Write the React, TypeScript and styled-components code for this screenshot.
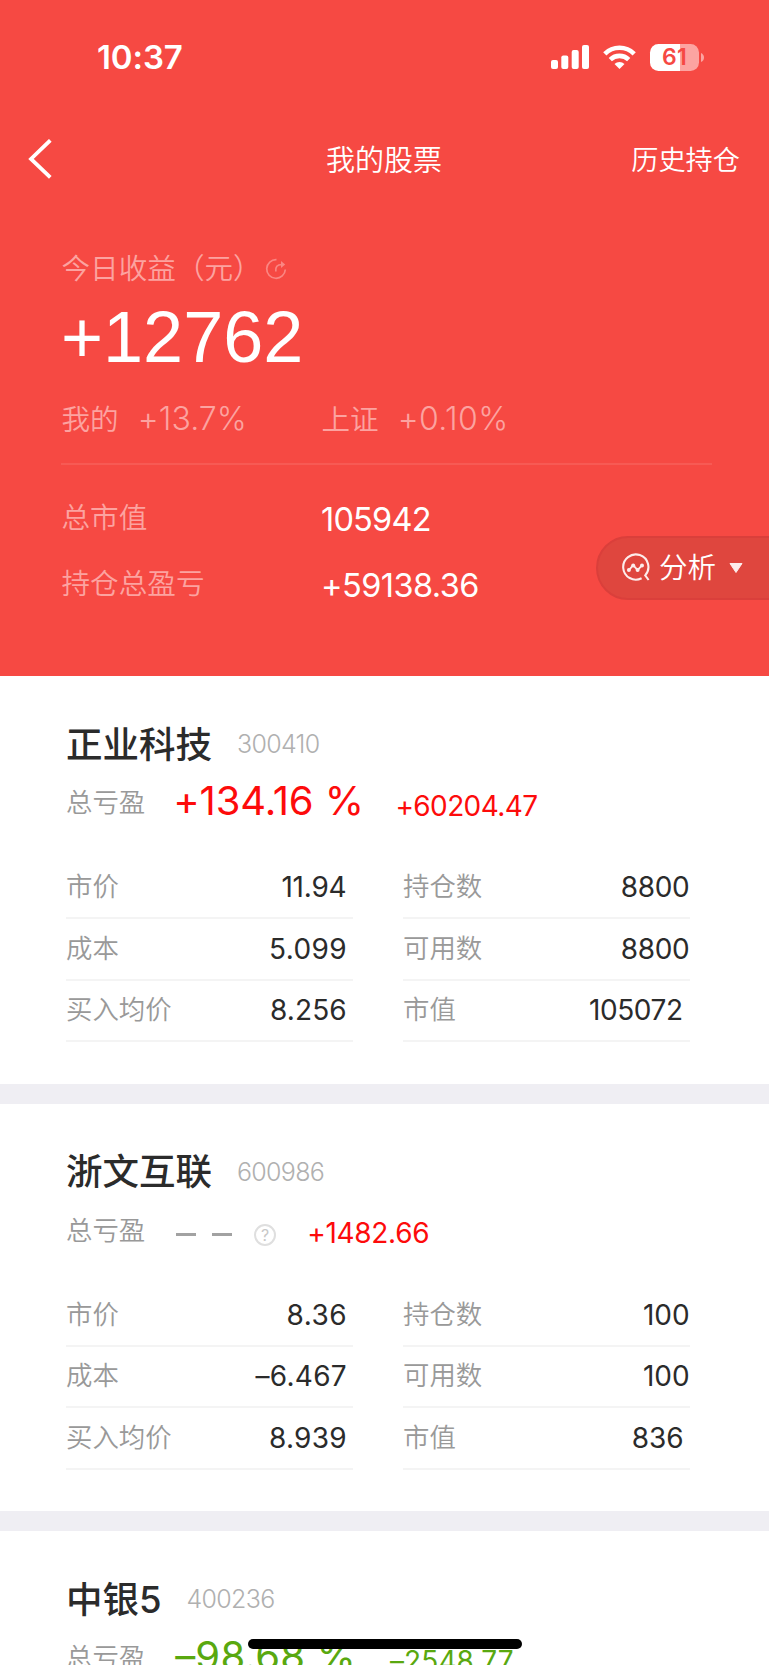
import React from "react";
import styled, { createGlobalStyle } from "styled-components";

const GlobalStyle = createGlobalStyle`
  * { box-sizing: border-box; }
  html, body { margin: 0; padding: 0; }
  body {
    background: #fff;
    font-family: Inter, "Noto Sans CJK SC", sans-serif;
    overflow: hidden;
  }
`;

const Screen = styled.div`
  position: relative;
  width: 769px;
  height: 1665px;
  overflow: hidden;
  background: #fff;
`;

const Hero = styled.header`
  height: 676px;
  background: #f64943;
  color: #fff;
`;

const StatusBar = styled.div`
  display: flex;
  align-items: center;
  justify-content: space-between;
  height: 114px;
  padding: 0 65px 0 97px;
`;

const Clock = styled.span`
  font-size: 33px;
  font-weight: 600;
  line-height: 40px;
  letter-spacing: -0.1px;
`;

const StatusIcons = styled.div`
  display: flex;
  align-items: center;
  gap: 14px;
`;

const BatteryWrap = styled.div`
  display: flex;
  align-items: center;
  gap: 2px;
`;

const Battery = styled.div`
  display: flex;
  align-items: center;
  justify-content: center;
  width: 49px;
  height: 27px;
  border-radius: 8.5px;
  background: linear-gradient(90deg, #fff 61%, #fca4a1 61%);
  color: #f64943;
  font-size: 23px;
  font-weight: 600;
  line-height: 27px;
  letter-spacing: 0.4px;
`;

const NavBar = styled.nav`
  display: grid;
  grid-template-columns: 1fr auto 1fr;
  align-items: center;
  height: 89px;
  padding: 0 29px 0 28px;
`;

const Title = styled.h1`
  margin: 0;
  padding-top: 4px;
  font-size: 29px;
  font-weight: 350;
  line-height: 40px;
`;

const NavLink = styled.span`
  justify-self: end;
  padding-top: 4px;
  font-size: 27.2px;
  font-weight: 350;
  line-height: 40px;
`;

const Summary = styled.section`
  padding: 46px 57px 0 61px;
`;

const Soft = styled.span`
  padding-left: 0.5px;
  font-size: 28.6px;
  font-weight: 350;
  line-height: 40px;
  color: #fca3a0;
`;

const SoftRate = styled.span<{ $tracking: number }>`
  margin-top: -2px;
  font-size: 32px;
  font-weight: 300;
  line-height: 40px;
  letter-spacing: ${(p) => p.$tracking}px;
  color: #fca3a0;
`;

const TodayLabel = styled.div`
  display: flex;
  align-items: center;
  gap: 3px;
  height: 40px;
`;

const TodayValue = styled.div`
  margin-top: 8px;
  font-family: "Liberation Sans", Arial, sans-serif;
  font-size: 72px;
  line-height: 80px;
`;

const Compare = styled.div`
  display: grid;
  grid-template-columns: 260px 1fr;
  height: 88px;
  padding-top: 23px;
  border-bottom: 2px solid #f75a54;
`;

const CompareItem = styled.div`
  display: flex;
  align-items: center;
  gap: 19px;
  height: 40px;
`;

const TotalRow = styled.div`
  display: grid;
  grid-template-columns: 260px 1fr;
  align-items: center;
  height: 66px;
`;

const Totals = styled.div`
  padding-top: 20px;
`;

const TotalValue = styled.span<{ $tracking: number }>`
  padding-top: 3px;
  font-size: 32.5px;
  font-weight: 400;
  line-height: 40px;
  letter-spacing: ${(p) => p.$tracking}px;
`;

const AnalysisButton = styled.button`
  position: absolute;
  top: 536px;
  right: -2px;
  display: flex;
  align-items: center;
  width: 175px;
  height: 64px;
  padding: 0 0 0 23px;
  border: 2px solid #da3f3b;
  border-radius: 32px 0 0 32px;
  background: #df463e;
  color: #fff;
  font-family: inherit;
  font-size: 28.5px;
  font-weight: 350;
`;

const AnalysisText = styled.span`
  margin: 0 13px 0 8px;
  line-height: 40px;
`;

const Card = styled.article`
  height: 427.6px;
  padding: 45px 79px 0 66px;
  border-bottom: 20px solid #efeef3;
`;

const NameRow = styled.div`
  display: flex;
  align-items: center;
  height: 46px;
`;

const Name = styled.h2`
  margin: 0;
  padding-top: 1px;
  font-size: 36.5px;
  font-weight: 500;
  line-height: 46px;
  color: #2b2b2b;
`;

const Code = styled.span`
  margin-left: 25px;
  font-size: 25px;
  font-weight: 300;
  line-height: 46px;
  letter-spacing: -0.7px;
  color: #b0b0b0;
`;

const ProfitRow = styled.div`
  display: flex;
  align-items: center;
  height: 50px;
  margin-top: 10px;
`;

const Label = styled.span`
  font-size: 26.4px;
  font-weight: 350;
  line-height: 40px;
  color: #999;
`;

const Percent = styled.span<{ $color: string; $gap: number; $tracking: number }>`
  margin: -2px 0 0 ${(p) => p.$gap}px;
  font-size: 40px;
  font-weight: 400;
  line-height: 50px;
  letter-spacing: ${(p) => p.$tracking}px;
  white-space: pre;
  color: ${(p) => p.$color};
`;

const Amount = styled.span<{ $color: string; $gap: number; $tracking: number }>`
  margin-left: ${(p) => p.$gap}px;
  padding-top: 7px;
  font-size: 28px;
  font-weight: 400;
  line-height: 40px;
  letter-spacing: ${(p) => p.$tracking}px;
  color: ${(p) => p.$color};
`;

const Unknown = styled.div`
  display: flex;
  align-items: center;
  margin-left: 31px;
  padding-top: 10px;
`;

const Dash = styled.i`
  width: 20px;
  height: 3px;
  margin-right: 16px;
  background: #a2a2a2;
`;

const Help = styled.span`
  display: flex;
  align-items: center;
  justify-content: center;
  width: 22px;
  height: 22px;
  margin-left: 6px;
  border: 2px solid #dfdfdf;
  border-radius: 50%;
  color: #c8c8c8;
  font-size: 16px;
  line-height: 20px;
`;

const Figures = styled.div`
  display: grid;
  grid-template-columns: 287px 287px;
  column-gap: 50px;
  margin-top: 31px;
`;

const Figure = styled.div`
  display: flex;
  align-items: center;
  justify-content: space-between;
  height: 61.4px;
  padding-bottom: 3px;
  border-bottom: 2px solid #f4f4f4;
`;

const FigureValue = styled.span<{ $inset: number; $tracking: number }>`
  padding-top: 2px;
  margin-right: ${(p) => p.$inset - p.$tracking}px;
  font-size: 28px;
  font-weight: 400;
  line-height: 40px;
  letter-spacing: ${(p) => p.$tracking}px;
  color: #2b2b2b;
`;

const HomeIndicator = styled.div`
  position: absolute;
  left: 248px;
  top: 1639px;
  width: 274px;
  height: 10px;
  border-radius: 5px;
  background: #000;
`;

const RED = "#fd0b0b";
const GREEN = "#59a80f";

interface Num {
  text: string;
  gap: number;
  tracking: number;
}

interface Stock {
  name: string;
  code: string;
  percent?: Num;
  amount: Num;
  color: string;
  figures: { label: string; value: string; inset: number; tracking: number }[];
}

const stocks: Stock[] = [
  {
    name: "正业科技",
    code: "300410",
    percent: { text: "+134.16 %", gap: 28, tracking: -0.1 },
    amount: { text: "+60204.47", gap: 31.5, tracking: -0.6 },
    color: RED,
    figures: [
      { label: "市价", value: "11.94", inset: 6.3, tracking: -0.2 },
      { label: "持仓数", value: "8800", inset: 0.4, tracking: -0.4 },
      { label: "成本", value: "5.099", inset: 6.3, tracking: 0.4 },
      { label: "可用数", value: "8800", inset: 0.4, tracking: -0.4 },
      { label: "买入均价", value: "8.256", inset: 6.3, tracking: 0.1 },
      { label: "市值", value: "105072", inset: 7, tracking: -0.4 },
    ],
  },
  {
    name: "浙文互联",
    code: "600986",
    amount: { text: "+1482.66", gap: 31, tracking: -0.3 },
    color: RED,
    figures: [
      { label: "市价", value: "8.36", inset: 6.3, tracking: 0.5 },
      { label: "持仓数", value: "100", inset: 0.4, tracking: -0.1 },
      { label: "成本", value: "–6.467", inset: 6.3, tracking: 0.3 },
      { label: "可用数", value: "100", inset: 0.4, tracking: -0.1 },
      { label: "买入均价", value: "8.939", inset: 6.3, tracking: 0.3 },
      { label: "市值", value: "836", inset: 6.4, tracking: 0 },
    ],
  },
  {
    name: "中银5",
    code: "400236",
    percent: { text: "–98.68 %", gap: 30, tracking: 0.2 },
    amount: { text: "–2548.77", gap: 34, tracking: 0.1 },
    color: GREEN,
    figures: [],
  },
];

const SignalIcon = () => (
  <svg width="38" height="24" viewBox="0 0 38 24" fill="#fff">
    <rect x="0" y="15" width="7" height="9" rx="2" />
    <rect x="10.3" y="10.5" width="7" height="13.5" rx="2" />
    <rect x="20.7" y="5" width="7" height="19" rx="2" />
    <rect x="31" y="0" width="7" height="24" rx="2" />
  </svg>
);

const WifiIcon = () => (
  <svg width="33" height="24" viewBox="0 0 33 24" fill="none" stroke="#fff" strokeWidth="4.6">
    <path d="M1.8 8.8A21 21 0 0 1 31.2 8.8" />
    <path d="M7.3 14.6A13.2 13.2 0 0 1 25.7 14.6" />
    <path d="M16.5 24l-5-5a7.2 7.2 0 0 1 10 0z" fill="#fff" stroke="none" />
  </svg>
);

const BackIcon = () => (
  <svg width="26" height="40" viewBox="0 0 26 40" fill="none" stroke="#fff" strokeWidth="3.8">
    <path d="M22.3 1.3L3 20l19.3 18.3" />
  </svg>
);

const RefreshIcon = () => (
  <svg width="22" height="22" viewBox="0 0 22 22" fill="none" stroke="#fa8682" strokeWidth="1.7">
    <path d="M11.5 1.7A9.3 9.3 0 1 0 20.3 11.5" />
    <path d="M10.8 13.5c-.6-4.5 1.4-7 6-7" />
    <path d="M16 3l4.2 3.500L16 10z" fill="#fa8682" stroke="none" />
  </svg>
);

const AnalysisIcon = () => (
  <svg width="30" height="30" viewBox="0 0 30 30" fill="none" stroke="#fdeceb" strokeWidth="2.1">
    <path d="M20.600 25.200A12.600 12.600 0 1 1 24.200 22.400L27.600 27" />
    <path d="M7.900 17.200l4.300-5 4.400 5 4.600-5" strokeWidth="1.8" />
    <g fill="#fdeceb" stroke="none">
      <circle cx="7.900" cy="17" r="2" />
      <circle cx="12.200" cy="12.400" r="2" />
      <circle cx="16.600" cy="17" r="2" />
      <circle cx="21" cy="12.600" r="2" />
    </g>
  </svg>
);

const StockCard = ({ stock }: { stock: Stock }) => (
  <Card>
    <NameRow>
      <Name>{stock.name}</Name>
      <Code>{stock.code}</Code>
    </NameRow>
    <ProfitRow>
      <Label>总亏盈</Label>
      {stock.percent ? (
        <Percent $color={stock.color} $gap={stock.percent.gap} $tracking={stock.percent.tracking}>
          {stock.percent.text}
        </Percent>
      ) : (
        <Unknown>
          <Dash />
          <Dash />
          <Help>?</Help>
        </Unknown>
      )}
      <Amount $color={stock.color} $gap={stock.amount.gap} $tracking={stock.amount.tracking}>
        {stock.amount.text}
      </Amount>
    </ProfitRow>
    <Figures>
      {stock.figures.map((f) => (
        <Figure key={f.label}>
          <Label>{f.label}</Label>
          <FigureValue $inset={f.inset} $tracking={f.tracking}>
            {f.value}
          </FigureValue>
        </Figure>
      ))}
    </Figures>
  </Card>
);

export default function App() {
  return (
    <Screen>
      <GlobalStyle />
      <Hero>
        <StatusBar>
          <Clock>10:37</Clock>
          <StatusIcons>
            <SignalIcon />
            <WifiIcon />
            <BatteryWrap>
              <Battery>61</Battery>
              <svg width="3" height="9" viewBox="0 0 3 9">
                <path d="M0 0q3 1.5 3 4.5t-3 4.5z" fill="#fca4a1" />
              </svg>
            </BatteryWrap>
          </StatusIcons>
        </StatusBar>
        <NavBar>
          <BackIcon />
          <Title>我的股票</Title>
          <NavLink>历史持仓</NavLink>
        </NavBar>
        <Summary>
          <TodayLabel>
            <Soft>今日收益（元）</Soft>
            <RefreshIcon />
          </TodayLabel>
          <TodayValue>+12762</TodayValue>
          <Compare>
            <CompareItem>
              <Soft>我的</Soft>
              <SoftRate $tracking={0.1}>+13.7%</SoftRate>
            </CompareItem>
            <CompareItem>
              <Soft>上证</Soft>
              <SoftRate $tracking={0.4}>+0.10%</SoftRate>
            </CompareItem>
          </Compare>
          <Totals>
            <TotalRow>
              <Soft>总市值</Soft>
              <TotalValue $tracking={-0.8}>105942</TotalValue>
            </TotalRow>
            <TotalRow>
              <Soft>持仓总盈亏</Soft>
              <TotalValue $tracking={-0.55}>+59138.36</TotalValue>
            </TotalRow>
          </Totals>
        </Summary>
      </Hero>
      <AnalysisButton>
        <AnalysisIcon />
        <AnalysisText>分析</AnalysisText>
        <svg width="14" height="10" viewBox="0 0 14 10">
          <path d="M1 .5h12L7 9.5z" fill="#fdeceb" stroke="#fdeceb" strokeLinejoin="round" />
        </svg>
      </AnalysisButton>
      {stocks.map((s) => (
        <StockCard key={s.code} stock={s} />
      ))}
      <HomeIndicator />
    </Screen>
  );
}
